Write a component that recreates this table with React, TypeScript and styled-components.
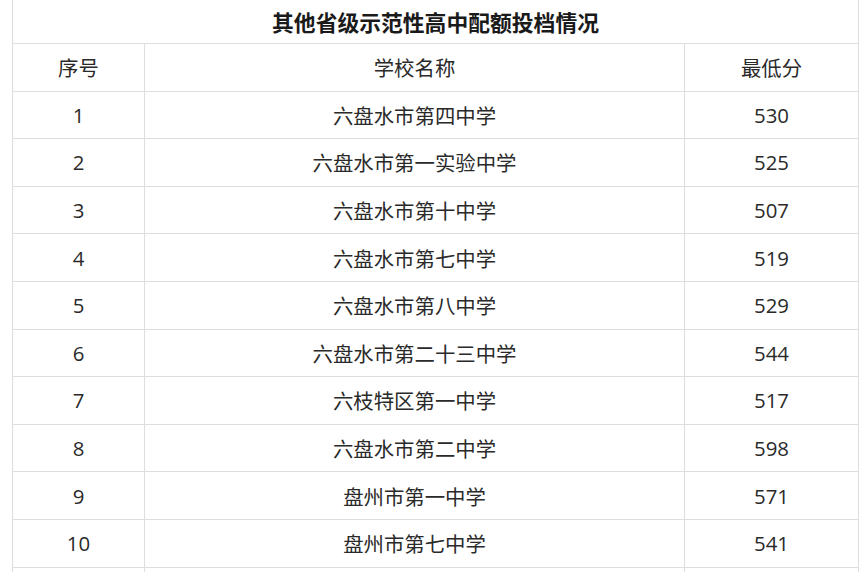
import * as React from 'react'
import styled, { createGlobalStyle } from 'styled-components'

interface School {
  no: number
  name: string
  score: number
}

const schools: School[] = [
  { no: 1, name: '六盘水市第四中学', score: 530 },
  { no: 2, name: '六盘水市第一实验中学', score: 525 },
  { no: 3, name: '六盘水市第十中学', score: 507 },
  { no: 4, name: '六盘水市第七中学', score: 519 },
  { no: 5, name: '六盘水市第八中学', score: 529 },
  { no: 6, name: '六盘水市第二十三中学', score: 544 },
  { no: 7, name: '六枝特区第一中学', score: 517 },
  { no: 8, name: '六盘水市第二中学', score: 598 },
  { no: 9, name: '盘州市第一中学', score: 571 },
  { no: 10, name: '盘州市第七中学', score: 541 },
]

const GlobalStyle = createGlobalStyle`
  html, body {
    margin: 0;
    background: #fff;
    overflow: hidden;
  }
  body {
    font-family: "Open Sans", "Noto Sans CJK SC", sans-serif;
    color: #222;
  }
`

const Page = styled.div`
  height: 572px;
  overflow: hidden;
  padding: 0 0 0 12px;
  box-sizing: border-box;
`

const Table = styled.table`
  width: 846px;
  margin-top: -1px;
  border-collapse: collapse;
  table-layout: fixed;

  td {
    border: 1px solid #dedede;
    padding: 0;
    text-align: center;
    vertical-align: middle;
    box-sizing: border-box;
  }
`

const TitleCell = styled.td`
  height: 44px;
  font-family: "Noto Sans CJK SC", sans-serif;
  font-weight: 700;
  font-size: 21.8px;
  color: #1a1a1a;
`

const Cell = styled.td<{ $cjk?: boolean }>`
  height: 47.6px;
  font-size: 20.4px;
  font-family: ${(p) => (p.$cjk ? '"Noto Sans CJK SC", sans-serif' : '"Open Sans", "Noto Sans CJK SC", sans-serif')};
  color: #2a2a2a;
`

export default function App() {
  return (
    <Page>
      <GlobalStyle />
      <Table>
        <colgroup>
          <col style={{ width: 132 }} />
          <col style={{ width: 540 }} />
          <col style={{ width: 174 }} />
        </colgroup>
        <tbody>
          <tr>
            <TitleCell colSpan={3}>其他省级示范性高中配额投档情况</TitleCell>
          </tr>
          <tr>
            <Cell $cjk>序号</Cell>
            <Cell $cjk>学校名称</Cell>
            <Cell $cjk>最低分</Cell>
          </tr>
          {schools.map((s) => (
            <tr key={s.no}>
              <Cell>{s.no}</Cell>
              <Cell $cjk>{s.name}</Cell>
              <Cell>{s.score}</Cell>
            </tr>
          ))}
          <tr>
            <Cell />
            <Cell />
            <Cell />
          </tr>
        </tbody>
      </Table>
    </Page>
  )
}
